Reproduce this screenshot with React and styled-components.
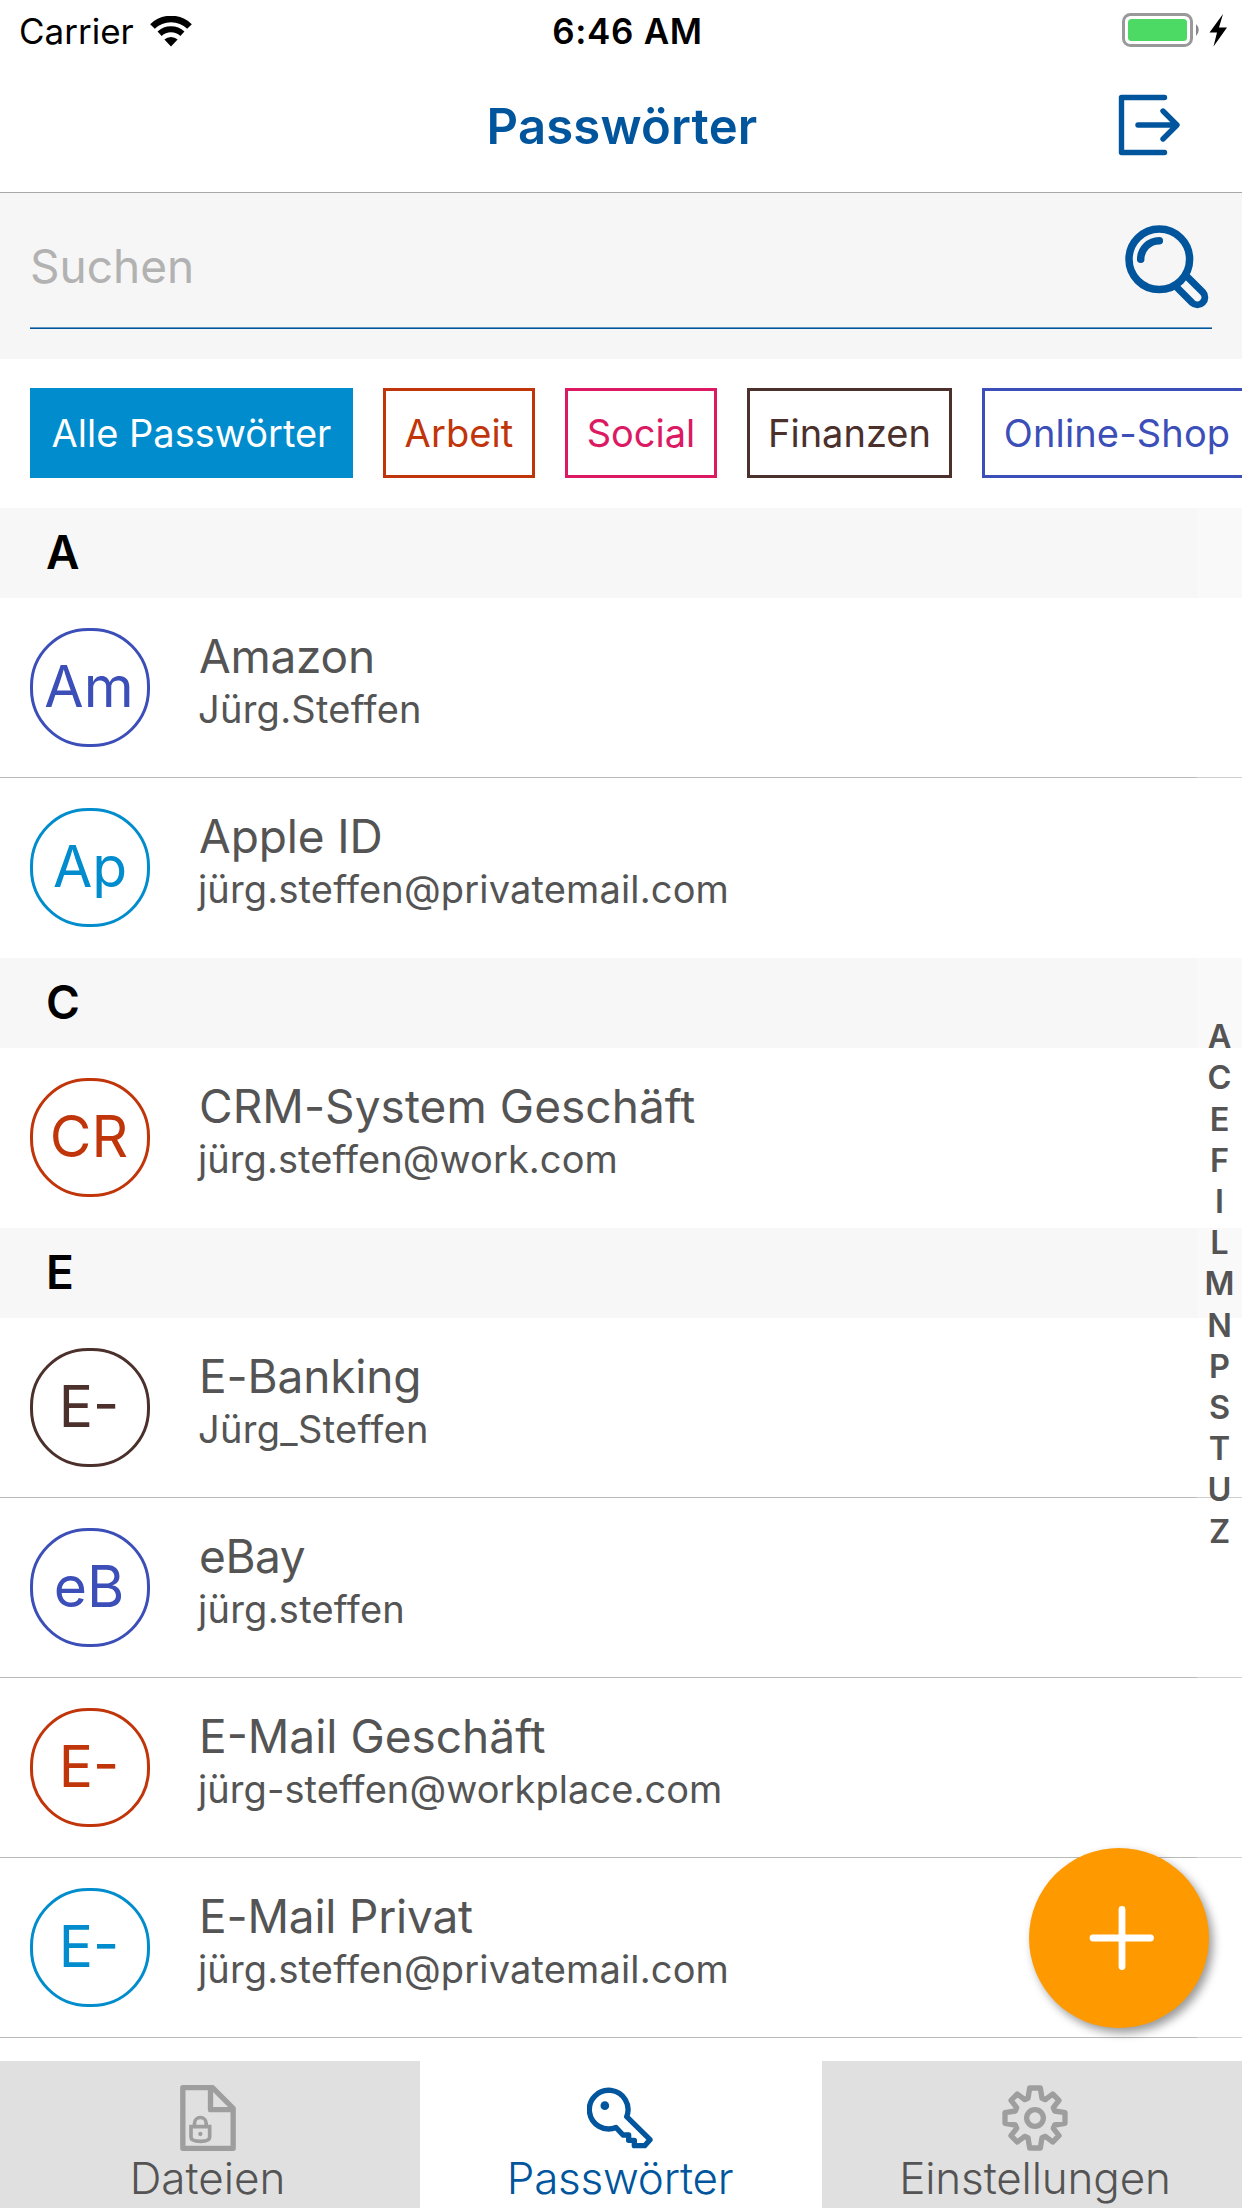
import React from "react";
import styled, { createGlobalStyle } from "styled-components";

const BLUE = "#00559d";
const SKY = "#008ccd";
const INDIGO = "#3c4eb8";
const RUST = "#c1350a";
const BROWN = "#4b302c";
const PINK = "#dc1a63";
const TEXT = "#545454";

const GlobalStyle = createGlobalStyle`
  * { box-sizing: border-box; }
  body { margin: 0; background: #fff; }
`;

const Screen = styled.div`
  width: 1242px;
  height: 2208px;
  display: flex;
  flex-direction: column;
  position: relative;
  overflow: hidden;
  background: #fff;
  color: ${TEXT};
  font-family: Inter, "Liberation Sans", sans-serif;
  white-space: nowrap;
`;

const StatusBar = styled.div`
  height: 60px;
  flex: none;
  display: grid;
  grid-template-columns: 1fr auto 1fr;
  align-items: center;
  padding: 2px 14px 0 19px;
  color: #000;
  line-height: 58px;
`;

const Carrier = styled.div`
  display: flex;
  align-items: center;
  gap: 16px;
  font-size: 35px;
`;

const Clock = styled.div`
  font-size: 35px;
  font-weight: 600;
  letter-spacing: 0.7px;
  padding-left: 8px;
`;

const Power = styled.div`
  display: flex;
  justify-content: flex-end;
  svg { display: block; }
`;

const NavBar = styled.header`
  height: 133px;
  flex: none;
  display: grid;
  grid-template-columns: 1fr auto 1fr;
  align-items: center;
  padding: 0 60px 0 60px;
  border-bottom: 1px solid #a9a9a9;
`;

const Title = styled.h1`
  grid-column: 2;
  margin: 0;
  padding: 2px 0 0 2px;
  font-size: 49px;
  line-height: 60px;
  font-weight: 600;
  letter-spacing: 0.2px;
  color: ${BLUE};
`;

const LogoutButton = styled.button`
  justify-self: end;
  border: 0;
  padding: 0 0 2px;
  background: none;
  svg { display: block; }
`;

const SearchArea = styled.div`
  height: 166px;
  flex: none;
  padding: 0 30px 30px;
  background: #f6f6f6;
`;

const SearchField = styled.div`
  height: 136px;
  display: flex;
  align-items: center;
  justify-content: space-between;
  padding: 13px 2px 0 0;
  border-bottom: 1px solid ${BLUE};
  box-shadow: inset 0 -1px 0 #6496c2;
  font-size: 46px;
  line-height: 60px;
  color: #b2b2b2;
  span { padding-bottom: 3px; }
  svg { display: block; }
`;

const Chips = styled.div`
  height: 149px;
  flex: none;
  display: flex;
  gap: 30px;
  padding: 29px 0 0 30px;
  overflow: hidden;
`;

const Chip = styled.div`
  flex: none;
  width: ${(p) => p.$w}px;
  height: 90px;
  display: flex;
  align-items: center;
  justify-content: center;
  border: 3px solid ${(p) => p.$color};
  background: ${(p) => (p.$active ? p.$color : "#fff")};
  color: ${(p) => (p.$active ? "#fff" : p.$color)};
  font-size: 38px;
  letter-spacing: ${(p) => p.$track || 0}px;
`;

const List = styled.main`
  flex: 1;
  min-height: 0;
  overflow: hidden;
`;

const SectionHeader = styled.h2`
  height: 90px;
  margin: 0;
  padding: 0 46px;
  background: #f7f7f7;
  color: #000;
  font-size: 46px;
  font-weight: 600;
  line-height: 88px;
`;

const Row = styled.div`
  height: 180px;
  display: flex;
  padding: 30px 30px 0;
  gap: 49px;
  border-bottom: 1px solid ${(p) => (p.$last ? "transparent" : "#b9b9b9")};
`;

const Avatar = styled.div`
  flex: none;
  width: 120px;
  height: 119px;
  display: flex;
  align-items: center;
  justify-content: center;
  padding: 0 ${(p) => (p.$nudge ? 0 : 2)}px 1px 0;
  border: 3px solid ${(p) => p.$color};
  border-radius: 58px;
  color: ${(p) => p.$color};
  font-size: 57px;
  line-height: 112px;
`;

const Entry = styled.div`
  display: flex;
  flex-direction: column;
`;

const Name = styled.div`
  font-size: 46px;
  line-height: 57px;
  letter-spacing: ${(p) => p.$track || 0}px;
`;

const User = styled.div`
  margin-left: -1px;
  font-size: 38px;
  line-height: 49px;
  letter-spacing: ${(p) => p.$track}px;
`;

const IndexBar = styled.nav`
  position: absolute;
  top: 508px;
  right: 0;
  width: 45px;
  height: 1553px;
  display: flex;
  flex-direction: column;
  align-items: center;
  justify-content: center;
  padding-bottom: 1px;
  background: rgba(255, 255, 255, 0.3);
  font-size: 32.5px;
  font-weight: 600;
  line-height: 41.2px;
`;

const AddButton = styled.button`
  position: absolute;
  left: 1029px;
  top: 1848px;
  width: 180px;
  height: 180px;
  display: flex;
  padding: 0;
  border: 0;
  border-radius: 50%;
  background: #ff9900;
  box-shadow: 4px 5px 10px rgba(0, 0, 0, 0.4);
`;

const TabBar = styled.footer`
  height: 147px;
  flex: none;
  display: grid;
  grid-template-columns: 420px 402px 420px;
`;

const Tab = styled.div`
  display: flex;
  flex-direction: column;
  align-items: center;
  padding: 24px ${(p) => p.$right || 0}px 0 ${(p) => p.$left || 0}px;
  background: ${(p) => (p.$active ? "#fff" : "#e0e0e0")};
  color: ${(p) => (p.$active ? BLUE : TEXT)};
  font-size: 44px;
  font-weight: 300;
  line-height: 54px;
  letter-spacing: ${(p) => p.$track || 0}px;
  svg { display: block; flex: none; }
`;

const WifiIcon = () => (
  <svg width="42" height="31" viewBox="0 0 42 31" fill="none">
    <path d="M2.5 10.5a26.5 26.5 0 0 1 37 0" stroke="#000" strokeWidth="6.6" />
    <path d="M9.6 17.8a16.6 16.6 0 0 1 22.8 0" stroke="#000" strokeWidth="6" />
    <path d="M14.4 23.6a9.6 9.6 0 0 1 13.2 0L21 30.5Z" fill="#000" />
  </svg>
);

const BatteryIcon = () => (
  <svg width="106" height="36" viewBox="0 0 106 36">
    <rect x="1.5" y="1.5" width="68" height="31" rx="7" fill="none" stroke="#999" strokeWidth="3" />
    <rect x="6" y="6" width="59" height="22" rx="3.5" fill="#4cd964" />
    <path d="M74 11a8 8 0 0 1 0 12Z" fill="#888" />
    <path d="M101 1 87.500 19.500h7.5L91.500 33.500 105 14.500h-8Z" fill="#000" />
  </svg>
);

const LogoutIcon = () => (
  <svg width="64" height="62" viewBox="0 0 64 62" fill="none" stroke={BLUE} strokeWidth="5.400" strokeLinecap="round" strokeLinejoin="round">
    <path d="M46.500 3.500H3.500v55h43" />
    <path d="M20 31h37.500M45 17l14 14-14 14" />
  </svg>
);

const SearchIcon = () => (
  <svg width="86" height="86" viewBox="1124 224 86 86" fill="none" stroke={BLUE} strokeWidth="7.500" strokeLinecap="round">
    <circle cx="1159.300" cy="259.300" r="30.300" />
    <path d="M1140.700 259.300a18.600 18.600 0 0 1 18.600-18.600" />
    <path strokeLinecap="butt" strokeWidth="7" d="M1185.500 275l17.300 17.200a7.500 7.500 0 0 1-10.600 10.600l-17.200-17.300" />
  </svg>
);

const PlusIcon = () => (
  <svg width="180" height="180" viewBox="0 0 180 180" stroke="#fff" strokeWidth="6.800" strokeLinecap="round">
    <path d="M64 90h57.500M93 61.500v57" />
  </svg>
);

const FileIcon = () => (
  <svg width="56" height="66" viewBox="0 0 167 198" fill="none" stroke="#9e9e9e" strokeWidth="16" strokeLinejoin="round">
    <path d="M8 8h89l62 62v120H8Z" />
    <path d="M91 8v66h68" />
    <g strokeWidth="11" strokeLinejoin="miter">
      <path d="M32.500 125h56v31q0 13-28 13t-28-13Z" />
      <path d="M43 125v-10a17.500 17.500 0 0 1 35 0v10" />
    </g>
    <circle cx="60.500" cy="147" r="6.500" fill="#9e9e9e" stroke="none" />
  </svg>
);

const KeyIcon = () => (
  <svg width="66" height="66" viewBox="0 0 198 198" fill="none" stroke={BLUE} strokeWidth="16" strokeLinejoin="round">
    <path d="M119 95l70 69-16 18h-31v-16h-17v-16h-17L87 127.500A58 58 0 1 1 119 95Z" />
    <circle cx="53.500" cy="62" r="13" fill={BLUE} stroke="none" />
  </svg>
);

const quarter = [[115, 9], [120, 40], [130, 44], [152, 27], [171, 46], [154, 68], [158, 78], [189, 83]];
const gearPoints = [0, 1, 2, 3]
  .flatMap((turn) =>
    quarter.map(([x, y]) => {
      let point = [x, y];
      for (let i = 0; i < turn; i += 1) point = [198 - point[1], point[0]];
      return point.join(",");
    })
  )
  .join(" ");

const GearIcon = () => (
  <svg width="66" height="66" viewBox="0 0 198 198" fill="none" stroke="#9e9e9e" strokeWidth="16" strokeLinejoin="round">
    <polygon points={gearPoints} />
    <circle cx="99" cy="99" r="25" />
  </svg>
);

const chips = [
  { label: "Alle Passwörter", color: SKY, w: 323, active: true },
  { label: "Arbeit", color: RUST, w: 152, track: 0.1 },
  { label: "Social", color: PINK, w: 152 },
  { label: "Finanzen", color: BROWN, w: 205 },
  { label: "Online-Shop", color: INDIGO, w: 270, track: 0.15 },
];

const sections = [
  { letter: "A", rows: [
    { short: "Am", name: "Amazon", track: -0.25, user: "Jürg.Steffen", userTrack: 0.25, color: INDIGO },
    { short: "Ap", nudge: true, name: "Apple ID", track: -0.1, user: "jürg.steffen@privatemail.com", userTrack: 0.16, color: SKY },
  ] },
  { letter: "C", rows: [
    { short: "CR", name: "CRM-System Geschäft", track: 0.05, user: "jürg.steffen@work.com", userTrack: 0.07, color: RUST },
  ] },
  { letter: "E", open: true, rows: [
    { short: "E-", name: "E-Banking", track: -0.15, user: "Jürg_Steffen", userTrack: 0.3, color: BROWN },
    { short: "eB", name: "eBay", track: -0.4, user: "jürg.steffen", userTrack: 0.25, color: INDIGO },
    { short: "E-", name: "E-Mail Geschäft", user: "jürg-steffen@workplace.com", userTrack: 0.07, color: RUST },
    { short: "E-", name: "E-Mail Privat", track: -0.2, user: "jürg.steffen@privatemail.com", userTrack: 0.16, color: SKY },
  ] },
];

export default function App() {
  return (
    <Screen>
      <GlobalStyle />
      <StatusBar>
        <Carrier><span>Carrier</span><WifiIcon /></Carrier>
        <Clock>6:46 AM</Clock>
        <Power><BatteryIcon /></Power>
      </StatusBar>
      <NavBar>
        <Title>Passwörter</Title>
        <LogoutButton aria-label="Abmelden"><LogoutIcon /></LogoutButton>
      </NavBar>
      <SearchArea>
        <SearchField><span>Suchen</span><SearchIcon /></SearchField>
      </SearchArea>
      <Chips>
        {chips.map((c) => (
          <Chip key={c.label} $color={c.color} $w={c.w} $track={c.track} $active={c.active}>{c.label}</Chip>
        ))}
      </Chips>
      <List>
        {sections.map((s) => (
          <section key={s.letter}>
            <SectionHeader>{s.letter}</SectionHeader>
            {s.rows.map((r, i) => (
              <Row key={r.name} $last={!s.open && i === s.rows.length - 1}>
                <Avatar $color={r.color} $nudge={r.nudge}>{r.short}</Avatar>
                <Entry>
                  <Name $track={r.track}>{r.name}</Name>
                  <User $track={r.userTrack}>{r.user}</User>
                </Entry>
              </Row>
            ))}
          </section>
        ))}
      </List>
      <TabBar>
        <Tab $right={5}><FileIcon /><span>Dateien</span></Tab>
        <Tab $active $right={2} $track={-0.25}><KeyIcon /><span>Passwörter</span></Tab>
        <Tab $left={6} $track={-0.15}><GearIcon /><span>Einstellungen</span></Tab>
      </TabBar>
      <IndexBar>
        {[..."ACEFILMNPSTUZ"].map((l) => <span key={l}>{l}</span>)}
      </IndexBar>
      <AddButton aria-label="Hinzufügen"><PlusIcon /></AddButton>
    </Screen>
  );
}
